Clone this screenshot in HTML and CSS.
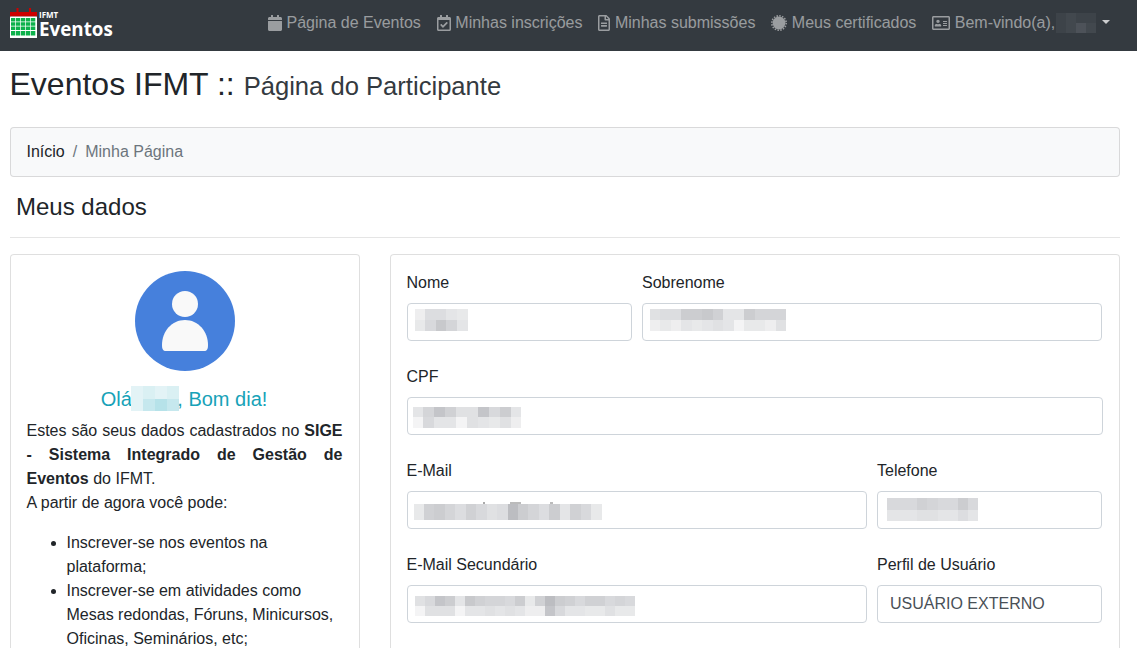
FILE: index.html
```html
<!DOCTYPE html>
<html lang="pt-BR">
<head>
<meta charset="utf-8">
<title>Eventos IFMT</title>
<link rel="stylesheet" href="styles.css">
</head>
<body>
<header class="navbar">
  <a class="brand">
    <svg class="brand-icon" width="27" height="31" viewBox="0 0 27 31">
      <rect class="peg" x="6.5" y="0" width="2" height="5"/>
      <rect class="peg" x="19" y="0" width="2" height="5"/>
      <rect class="peg" x="0" y="4" width="27" height="4.5"/>
      <rect class="sheet" x="0" y="8.5" width="27" height="21.5" rx="0.5"/>
      <path class="cells" d="M1 10h4.3v3.4H1zM6 10h4.3v3.4H6zM11 10h4.3v3.4H11zM16 10h4.3v3.4H16zM21 10h4.3v3.4H21zM1 14.3h4.3v3.4H1zM6 14.3h4.3v3.4H6zM11 14.3h4.3v3.4H11zM16 14.3h4.3v3.4H16zM21 14.3h4.3v3.4H21zM1 18.6h4.3v3.4H1zM6 18.6h4.3v3.4H6zM11 18.6h4.3v3.4H11zM16 18.6h4.3v3.4H16zM21 18.6h4.3v3.4H21zM1 22.9h4.3v4.6H1zM6 22.9h4.3v4.6H6zM11 22.9h4.3v4.6H11zM16 22.9h4.3v4.6H16zM21 22.9h4.3v4.6H21z"/>
    </svg>
    <span class="brand-text"><span class="brand-small">IFMT</span><span class="brand-big">Eventos</span></span>
  </a>
  <nav class="nav">
    <a class="nav-link"><svg class="ico" width="14" height="16" viewBox="0 0 448 512"><path d="M12 192h424c6.6 0 12 5.4 12 12v260c0 26.5-21.5 48-48 48H48c-26.5 0-48-21.5-48-48V204c0-6.6 5.4-12 12-12zm436-44v-36c0-26.5-21.5-48-48-48h-48V12c0-6.6-5.4-12-12-12h-40c-6.6 0-12 5.4-12 12v52H160V12c0-6.6-5.4-12-12-12h-40c-6.6 0-12 5.4-12 12v52H48C21.5 64 0 85.5 0 112v36c0 6.6 5.4 12 12 12h424c6.6 0 12-5.4 12-12z"/></svg>Página de Eventos</a>
    <a class="nav-link"><svg class="ico" width="14" height="16" viewBox="0 0 448 512"><path d="M400 64h-48V12c0-6.6-5.4-12-12-12h-40c-6.6 0-12 5.4-12 12v52H160V12c0-6.6-5.4-12-12-12h-40c-6.6 0-12 5.4-12 12v52H48C21.5 64 0 85.5 0 112v352c0 26.5 21.5 48 48 48h352c26.5 0 48-21.5 48-48V112c0-26.5-21.5-48-48-48zm-6 400H54a6 6 0 0 1-6-6V160h352v298a6 6 0 0 1-6 6zm-52.849-200.65L198.842 404.519c-4.705 4.667-12.303 4.637-16.971-.068l-75.091-75.699c-4.667-4.705-4.637-12.303.068-16.971l22.719-22.536c4.705-4.667 12.303-4.637 16.97.069l44.104 44.461 111.072-110.181c4.705-4.667 12.303-4.637 16.971.068l22.536 22.718c4.667 4.705 4.636 12.303-.069 16.97z"/></svg>Minhas inscrições</a>
    <a class="nav-link"><svg class="ico" width="12" height="16" viewBox="0 0 384 512"><path d="M288 248v28c0 6.6-5.4 12-12 12H108c-6.6 0-12-5.4-12-12v-28c0-6.6 5.4-12 12-12h168c6.6 0 12 5.4 12 12zm-12 72H108c-6.6 0-12 5.4-12 12v28c0 6.6 5.4 12 12 12h168c6.6 0 12-5.4 12-12v-28c0-6.6-5.4-12-12-12zm108-188.1V464c0 26.5-21.5 48-48 48H48c-26.5 0-48-21.5-48-48V48C0 21.5 21.5 0 48 0h204.1C264.8 0 277 5.1 286 14.1L369.9 98c9 8.9 14.1 21.2 14.1 33.9zm-128-80V128h76.1L256 51.9zM336 464V176H232c-13.3 0-24-10.7-24-24V48H48v416h288z"/></svg>Minhas submissões</a>
    <a class="nav-link"><svg class="ico" width="16" height="16" viewBox="0 0 16 16"><circle cx="8" cy="8" r="6.4"/><circle class="teeth" cx="8" cy="8" r="7.2"/></svg>Meus certificados</a>
    <a class="nav-link"><svg class="ico" width="18" height="16" viewBox="0 0 576 512"><path d="M528 32H48C21.5 32 0 53.5 0 80v352c0 26.5 21.5 48 48 48h480c26.5 0 48-21.5 48-48V80c0-26.5-21.5-48-48-48zm0 400H48V80h480v352zM360 352h112c4.4 0 8-3.6 8-8v-16c0-4.4-3.6-8-8-8H360c-4.4 0-8 3.6-8 8v16c0 4.4 3.6 8 8 8zm0-64h112c4.4 0 8-3.6 8-8v-16c0-4.4-3.6-8-8-8H360c-4.4 0-8 3.6-8 8v16c0 4.4 3.6 8 8 8zm0-64h112c4.4 0 8-3.6 8-8v-16c0-4.4-3.6-8-8-8H360c-4.4 0-8 3.6-8 8v16c0 4.4 3.6 8 8 8zm-168 32c30 0 54-24 54-54s-24-54-54-54-54 24-54 54 24 54 54 54zm-90 112h180c8 0 14-6 14-14v-18c0-30-26-50-56-50-12 0-20 6-48 6s-36-6-48-6c-30 0-56 20-56 50v18c0 8 6 14 14 14z"/></svg>Bem-vindo(a),<span class="mosaic m-user"><i class="n2"></i><i class="n2"></i><i class="n3"></i><i class="n3"></i><i class="n2"></i><i class="n4"></i><i class="n2"></i><i class="n3"></i></span><span class="caret"></span></a>
  </nav>
</header>

<main class="container">
  <h1 class="page-title">Eventos IFMT :: <small>Página do Participante</small></h1>
  <ol class="breadcrumb">
    <li class="crumb-link">Início</li>
    <li class="crumb-sep">/</li>
    <li class="crumb-active">Minha Página</li>
  </ol>
  <h2 class="section-title">Meus dados</h2>
  <hr class="divider">

  <div class="columns">
    <aside class="card card-left">
      <svg class="avatar" width="100" height="100" viewBox="0 0 100 100">
        <circle class="avatar-bg" cx="50" cy="50" r="50"/>
        <circle class="avatar-fg" cx="50" cy="33" r="13"/>
        <path class="avatar-fg" d="M31 80C28 80 27 78 27 74 27 60 37 49 50 49S73 60 73 74C73 78 72 80 69 80Z"/>
      </svg>
      <h5 class="greeting"><span>Olá</span><span class="mosaic m-hello"><i class="h1"></i><i class="h1"></i><i class="h2"></i><i class="h3"></i><i class="h1"></i><i class="h4"></i><i class="h2"></i><i class="h3"></i></span><span>, Bom dia!</span></h5>
      <p class="intro">Estes são seus dados cadastrados no <strong>SIGE - Sistema Integrado de Gestão de Eventos</strong> do IFMT.<br>A partir de agora você pode:</p>
      <ul class="perks">
        <li>Inscrever-se nos eventos na plataforma;</li>
        <li>Inscrever-se em atividades como Mesas redondas, Fóruns, Minicursos, Oficinas, Seminários, etc;</li>
      </ul>
    </aside>

    <section class="card card-right">
      <div class="form-row row-a">
        <div class="field"><label>Nome</label><div class="input">
          <span class="mosaic m-nome"><i class="b"></i><i class="c"></i><i class="f"></i><i class="g"></i><i class="f"></i><i class="k"></i><i class="d"></i><i class="h"></i><i class="c"></i><i class="d"></i></span>
        </div></div>
        <div class="field"><label>Sobrenome</label><div class="input">
          <span class="mosaic m-sobre"><i class="e"></i><i class="b"></i><i class="f"></i><i class="c"></i><i class="f"></i><i class="b"></i><i class="j"></i><i class="d"></i><i class="j"></i><i class="c"></i><i class="k"></i><i class="d"></i><i class="i"></i><i class="e"></i><i class="d"></i><i class="d"></i><i class="d"></i><i class="a"></i><i class="j"></i><i class="c"></i><i class="h"></i><i class="c"></i><i class="h"></i><i class="b"></i><i class="h"></i><i class="e"></i></span>
        </div></div>
      </div>
      <div class="form-row row-full">
        <div class="field"><label>CPF</label><div class="input">
          <span class="mosaic m-cpf"><i class="d"></i><i class="a"></i><i class="h"></i><i class="g"></i><i class="l"></i><i class="d"></i><i class="i"></i><i class="d"></i><i class="e"></i><i class="a"></i><i class="e"></i><i class="e"></i><i class="l"></i><i class="d"></i><i class="g"></i><i class="c"></i><i class="j"></i><i class="e"></i><i class="d"></i><i class="b"></i></span>
        </div></div>
      </div>
      <div class="form-row row-b">
        <div class="field"><label>E-Mail</label><div class="input">
          <span class="mosaic m-mail"><i class="c"></i><i class="i"></i><i class="j"></i><i class="h"></i><i class="f"></i><i class="i"></i><i class="g"></i><i class="e"></i><i class="f"></i><i class="m"></i><i class="j"></i><i class="h"></i><i class="f"></i><i class="j"></i><i class="d"></i><i class="i"></i><i class="g"></i><i class="c"></i></span>
        </div></div>
        <div class="field"><label>Telefone</label><div class="input">
          <span class="mosaic m-fone"><i class="g"></i><i class="d"></i><i class="g"></i><i class="d"></i><i class="g"></i><i class="d"></i><i class="i"></i><i class="e"></i><i class="h"></i><i class="e"></i><i class="g"></i><i class="d"></i><i class="g"></i><i class="d"></i><i class="j"></i><i class="f"></i><i class="g"></i><i class="d"></i></span>
        </div></div>
      </div>
      <div class="form-row row-b">
        <div class="field"><label>E-Mail Secundário</label><div class="input">
          <span class="mosaic m-sec"><i class="e"></i><i class="a"></i><i class="g"></i><i class="e"></i><i class="l"></i><i class="e"></i><i class="j"></i><i class="e"></i><i class="d"></i><i class="a"></i><i class="k"></i><i class="d"></i><i class="i"></i><i class="d"></i><i class="h"></i><i class="e"></i><i class="h"></i><i class="d"></i><i class="g"></i><i class="e"></i><i class="j"></i><i class="d"></i><i class="c"></i><i class="b"></i><i class="i"></i><i class="b"></i><i class="m"></i><i class="l"></i><i class="j"></i><i class="g"></i><i class="i"></i><i class="d"></i><i class="g"></i><i class="d"></i><i class="i"></i><i class="c"></i><i class="i"></i><i class="c"></i><i class="g"></i><i class="e"></i><i class="h"></i><i class="c"></i><i class="g"></i><i class="c"></i></span>
        </div></div>
        <div class="field"><label>Perfil de Usuário</label><div class="input input-text">USUÁRIO EXTERNO</div></div>
      </div>
    </section>
  </div>
</main>
</body>
</html>
```
FILE: styles.css
```css
* { box-sizing: border-box; }
html, body { height: 648px; overflow: hidden; }
body {
  margin: 0;
  background: #fff;
  color: #212529;
  font-family: "Liberation Sans", Arial, sans-serif;
  font-size: 16px;
  line-height: 24px;
}

/* Navbar */
.navbar {
  height: 51px;
  background: #343a40;
  display: flex;
  justify-content: space-between;
  align-items: flex-start;
  padding: 0 18.75px 0 10px;
}
.brand { display: flex; align-items: flex-start; padding-top: 8px; color: #fff; }
.brand-icon { display: block; }
.peg { fill: #cc0000; }
.sheet { fill: #fff; }
.cells { fill: #0db14b; }
.brand-text { display: flex; flex-direction: column; margin-left: 2px; }
.brand-small { font: bold 8px/9px "Open Sans", sans-serif; margin-top: 2px; }
.brand-big { font: bold 18.8px/20px "Open Sans", sans-serif; }
.nav { display: flex; padding-top: 11px; }
.nav-link {
  display: flex;
  align-items: center;
  padding: 0 8px;
  color: rgba(255, 255, 255, .5);
  white-space: nowrap;
}
.ico { fill: rgba(255, 255, 255, .5); margin-right: 4.45px; flex: none; }
.teeth { fill: none; stroke: #9a9c9f; stroke-width: 1.6; stroke-dasharray: 1.5 1.33; }
.caret {
  width: 0;
  height: 0;
  margin: -3px 0 0 6px;
  border-top: 4.8px solid rgba(255, 255, 255, .75);
  border-left: 4.8px solid transparent;
  border-right: 4.8px solid transparent;
}

/* Pixelated (redacted) blocks */
.mosaic { display: inline-grid; grid-auto-flow: column; grid-template-rows: 1fr 1fr; flex: none; }
.mosaic i { display: block; }
.a { background: #f4f4f5; } .b { background: #eeeeef; } .c { background: #e8e9ea; } .d { background: #e4e5e7; }
.e { background: #e0e1e3; } .f { background: #dcdde0; } .g { background: #d8d9dc; } .h { background: #d4d5d8; }
.i { background: #d0d1d4; } .j { background: #cccdd0; } .k { background: #c8c9cc; } .l { background: #c4c5c9; } .m { background: #bcbdc1; }
.n2 { background: #3d4349; } .n3 { background: #42484e; } .n4 { background: #4d5259; }
.h1 { background: #e3f3f6; } .h2 { background: #daf0f3; } .h3 { background: #c6e8ee; } .h4 { background: #b6e2e9; }
.m-user { width: 40px; height: 20px; margin-left: 1px; grid-template-columns: repeat(4, 1fr); }
.m-hello { width: 48px; height: 25px; margin: 0 -1.5px 0 -1px; grid-template-columns: repeat(4, 1fr); }
.m-nome { width: 53px; height: 22px; margin-top: -4px; grid-template-columns: repeat(5, 1fr); }
.m-sobre { width: 136px; height: 22px; margin-top: -4px; grid-template-columns: repeat(13, 1fr); }
.m-cpf { width: 109px; height: 21px; margin-left: -2px; margin-top: 2px; grid-template-columns: repeat(10, 1fr); }
.m-mail { position: relative; width: 188px; height: 16px; margin-left: -1px; margin-top: 4px; grid-template-rows: 1fr; grid-template-columns: repeat(18, 1fr); }
.m-mail::before {
  content: "";
  position: absolute;
  left: 69px;
  top: -2px;
  width: 76px;
  height: 2px;
  background: linear-gradient(90deg, #aaa 0 2px, transparent 2px 27px, #bbb 27px 38px, transparent 38px 67px, #bbb 67px 70px, transparent 70px);
}
.m-fone { width: 91px; height: 23px; margin-left: 2px; margin-top: -1px; grid-template-columns: repeat(9, 1fr); }
.m-sec { width: 220px; height: 20px; margin-top: 4px; grid-template-columns: repeat(22, 1fr); }

/* Page */
.container { padding: 0 17px 0 9.5px; }
.page-title {
  margin: 14px 0 24px;
  font-size: 32px;
  line-height: 38px;
  font-weight: 400;
}
.page-title small { font-size: 25.6px; line-height: 1; color: #343a40; }
.breadcrumb {
  list-style: none;
  margin: 0 0 16px;
  padding: 12px 16px;
  display: flex;
  gap: 8px;
  background: #f8f9fa;
  border: 1px solid rgba(0, 0, 0, .125);
  border-radius: 4px;
}
.crumb-sep, .crumb-active { color: #6c757d; }
.section-title {
  margin: 0 0 17px 6.5px;
  font-size: 24px;
  line-height: 27px;
  font-weight: 400;
}
.divider { margin: 0 0 16px; border: 0; border-top: 1px solid rgba(0, 0, 0, .1); }
.columns { display: flex; gap: 30px; align-items: flex-start; }
.card {
  background: #fff;
  border: 1px solid rgba(0, 0, 0, .125);
  border-radius: 4px;
  padding: 16px;
}
.card-left { width: 350px; flex: none; height: 600px; }
.card-right { width: 730px; flex: none; height: 600px; }

/* Left card */
.avatar { display: block; margin: 0 auto 15px; }
.avatar-bg { fill: #4680dc; }
.avatar-fg { fill: #f9f9f9; }
.greeting {
  display: flex;
  justify-content: center;
  align-items: center;
  margin: 0 0 8px;
  padding-right: 1px;
  font-size: 20px;
  line-height: 24px;
  font-weight: 400;
  color: #17a2b8;
  white-space: pre;
}
.intro { margin: 0 0 16px; text-align: justify; }
.perks { margin: 0; padding-left: 40px; }

/* Right card */
.form-row { display: grid; column-gap: 10.5px; margin-bottom: 24px; }
.row-a { grid-template-columns: 225px 459.5px; }
.row-b { grid-template-columns: 460px 224.5px; }
.row-full { grid-template-columns: 696px; }
.field label { display: block; margin-bottom: 8px; }
.input {
  height: 38px;
  display: flex;
  align-items: center;
  padding: 0 7px;
  background: #fff;
  border: 1px solid #ced4da;
  border-radius: 4px;
  overflow: hidden;
}
.input-text { padding: 0 12px; color: #495057; }
```
